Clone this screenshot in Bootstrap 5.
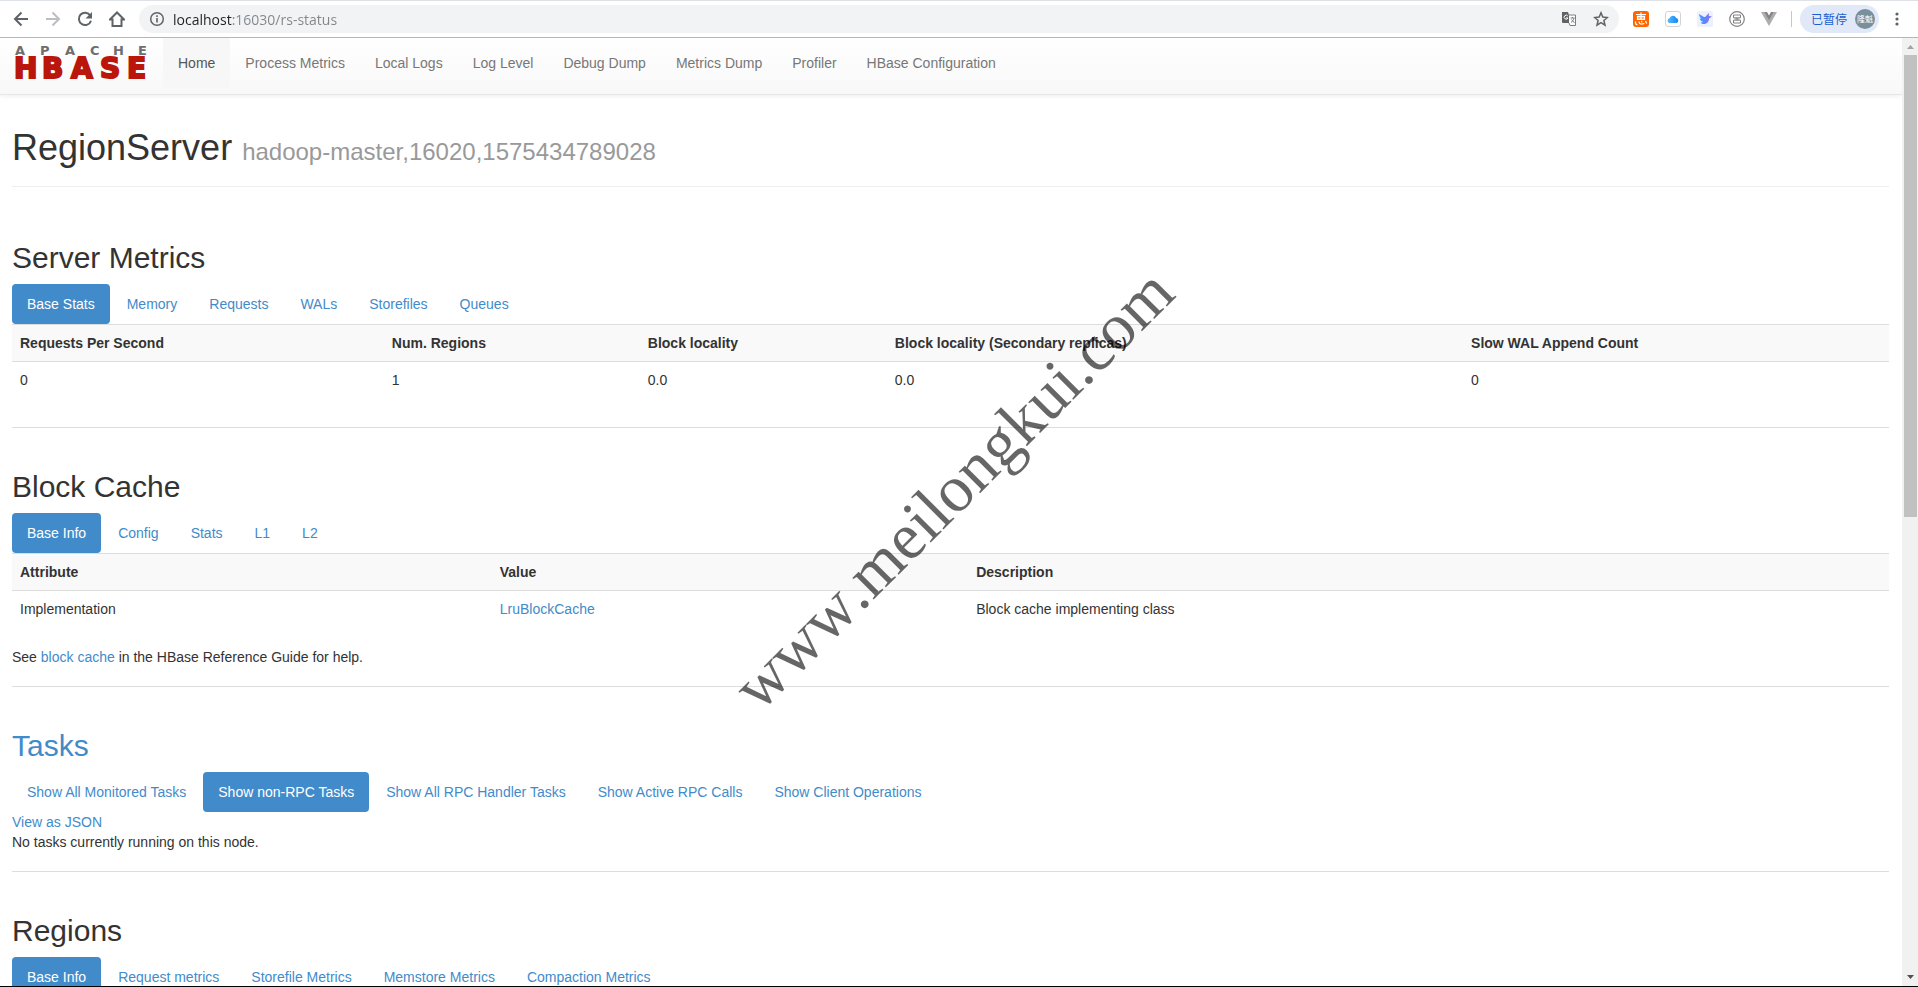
<!DOCTYPE html>
<html lang="en">
<head>
<meta charset="utf-8">
<meta name="viewport" content="width=device-width, initial-scale=1">
<title>HBase Region Server: hadoop-master</title>
<link href="https://cdn.jsdelivr.net/npm/bootstrap@5.3.0/dist/css/bootstrap.min.css" rel="stylesheet">
<style>
body { font-family: "Liberation Sans", Arial, sans-serif; font-size: 14px; line-height: 20px; color: #333; border-bottom: 1px solid #000; }
a { color: #428bca; text-decoration: none; }

/* browser toolbar */
.toolbar { height: 38px; padding: 0 13px; border-top: 1px solid #dee1e6; border-bottom: 1px solid #b6b6b6; background: #fff; }
.toolbar svg { display: block; }
.tool-btn { padding: 0; border: 0; background: none; width: 16px; height: 16px; flex: none; }
.omnibox { height: 28px; margin: 0 14px; border-radius: 14px; background: #f1f3f4; padding: 0 10px; }
.omnibox input { border: 0; outline: 0; padding: 0; height: 26px; font: 14px/20px "Open Sans", sans-serif; color: #202124; -webkit-text-fill-color: transparent; background: linear-gradient(to right, #202124 59px, #80868b 59px); -webkit-background-clip: text; background-clip: text; }
.tool-sep { width: 1px; height: 16px; margin: 0 8px 0 14px; background: #c4c7cb; }
.profile { height: 28px; margin-right: 10px; border: 0; border-radius: 14px; background: #e1e9f8; color: #1a5fd0; padding: 0 4px 0 11px; gap: 8px; font: 12px/20px "Noto Sans CJK SC", sans-serif; }
.avatar { width: 20px; height: 20px; border-radius: 50%; background: #78909c; color: #fff; font-size: 8px; line-height: 20px; text-align: center; }

/* scrolled page */
.page-view { overflow: hidden; }
.site-nav { padding: 0 0 0 14px; border-bottom: 1px solid #e7e7e7; background: linear-gradient(#fff, #f8f8f8); box-shadow: 0 1px 5px rgba(0,0,0,.075); height: 57px; }
.brand { margin-right: 15px; }
.brand svg { overflow: visible; }
.site-nav .nav-link { padding: 15px; line-height: 20px; height: 50px; color: #777; }
.site-nav .nav-link.active { color: #555; background: #f7f7f7; }
.page-body { padding: 33px 13px 0 12px; }
.page-title { font-size: 36px; line-height: 40px; margin: 0; padding-bottom: 14px; border-bottom: 1px solid #eee; font-weight: 400; }
.page-title small { font-size: 24px; color: #999; font-weight: 400; }
.block { padding: 42px 0 9px; border-bottom: 1px solid #ddd; }
.block:first-of-type { padding-top: 54px; }
.block h2 { font-size: 30px; line-height: 33px; margin: 0 0 10px; font-weight: 400; }
.block .nav { gap: 2px; }
.block .nav-link { padding: 10px 15px; border-radius: 4px; line-height: 20px; color: #428bca; }
.block .nav-link.active { background: #428bca; color: #fff; }
.block p { margin: 0 0 10px; }
.data-table { margin-bottom: 20px; color: #333; }
.data-table > tbody > tr > * { border-top: 1px solid #ddd; border-bottom: 0; padding: 8px; color: #333; }
.data-table > tbody > tr:nth-child(odd) > * { background: #f9f9f9; }

.scroll-rail { width: 16px; background: #f1f1f1; padding: 0 1px 0 2px; }
.scroll-thumb { height: 48.75%; background: #c1c1c1; }
.scroll-rail svg { display: block; flex: none; }
.watermark { position: absolute; top: calc(50% - 4px); left: calc(50% - 6px); font: 66px/66px "Liberation Serif", "Times New Roman", serif; font-kerning: none; color: rgba(0,0,0,.6); white-space: nowrap; transform: translate(-50%, -50%) rotate(-45deg); pointer-events: none; }
</style>
</head>
<body class="d-flex flex-column vh-100 overflow-hidden position-relative">

<header class="toolbar d-flex align-items-center flex-shrink-0">
  <div class="d-flex gap-3 flex-shrink-0">
    <button class="tool-btn" aria-label="Back"><svg width="16" height="16" fill="none" stroke="#5f6368" stroke-width="2"><path d="M15 8H2.500M8.500 1.500L2 8l6.500 6.500"/></svg></button>
    <button class="tool-btn" aria-label="Forward"><svg width="16" height="16" fill="none" stroke="#bcbec1" stroke-width="2"><path d="M1 8h12.500M7.500 1.500L14 8l-6.500 6.500"/></svg></button>
    <button class="tool-btn" aria-label="Reload"><svg width="16" height="16" fill="none" stroke="#5f6368" stroke-width="2"><path d="M13.300 4.500A6.200 6.200 0 1 0 14 9.700"/><path d="M15 1v6.500H8.500z" fill="#5f6368" stroke="none"/></svg></button>
    <button class="tool-btn" aria-label="Home"><svg width="16" height="16" fill="none" stroke="#5f6368" stroke-width="2"><path d="M1 8.500h2.500V15h9V8.500H15L8 1.500z"/></svg></button>
  </div>
  <div class="omnibox d-flex align-items-center flex-grow-1">
    <button class="tool-btn" aria-label="Site information"><svg width="16" height="16" fill="none" stroke="#5f6368"><circle cx="8" cy="8" r="6.300" stroke-width="1.500"/><path d="M8 7v4.500M8 4.200v1.700" stroke-width="1.600"/></svg></button>
    <input class="flex-grow-1 ms-2" type="text" aria-label="Address" value="localhost:16030/rs-status">
    <button class="tool-btn" aria-label="Translate"><svg width="16" height="16"><path d="M1 1h6l3.500 11H2a1 1 0 0 1-1-1z" fill="#5f6368"/><path d="M8 4h6.500v10.500H9L8 12" fill="#fff" stroke="#7a7e82"/><path d="M6.800 5A2 2 0 1 0 7 7H5" fill="none" stroke="#fff"/><path d="M9.500 7h4M11.500 6v1M13 7c-.5 2-1.500 3.500-3 4.500M10.500 8.500l3 3.500" fill="none" stroke="#7a7e82"/></svg></button>
    <button class="tool-btn ms-3" aria-label="Bookmark"><svg width="16" height="16" fill="none" stroke="#5f6368" stroke-width="1.500"><path d="M8 1.800l1.800 4.300 4.600.4-3.500 3 1.100 4.600L8 11.700l-4 2.400 1.100-4.600-3.500-3 4.600-.4z"/></svg></button>
  </div>
  <div class="d-flex gap-3 flex-shrink-0">
    <button class="tool-btn" aria-label="Shopping extension"><svg width="16" height="16"><rect width="16" height="16" rx="3" fill="#f60"/><path d="M3 3.500h10M8 1.500v7M4.500 5.300h7v3.200h-7zM4.500 7h7M2.500 10.500v1.500q0 1.500 2 2M6 10.500q0 2.500 2.500 2.500t2.500-1M8.500 10l.5 1.500M12.500 10l1.200 2.500" fill="none" stroke="#fff" stroke-width="1.200"/></svg></button>
    <button class="tool-btn" aria-label="Cloud extension"><svg width="16" height="16"><defs><linearGradient id="cloud"><stop stop-color="#55b9ff"/><stop offset="1" stop-color="#1687f0"/></linearGradient></defs><rect x=".5" y=".5" width="15" height="15" rx="2.500" fill="#fff" stroke="#d4d4d4"/><path d="M4.500 12a2.400 2.400 0 0 1 0-4.700 3.600 3.600 0 0 1 6.700-.3A2.600 2.600 0 0 1 11.500 12z" fill="url(#cloud)"/></svg></button>
    <button class="tool-btn" aria-label="Bird extension"><svg width="16" height="16"><defs><linearGradient id="bird"><stop stop-color="#3c9cff"/><stop offset="1" stop-color="#8c6cf5"/></linearGradient></defs><rect width="16" height="16" rx="2" fill="#edf1fd"/><path d="M2 3l5 3c1 .2 1.500-.3 2-1l3-3-.2 3L15 5.500l-3 2c0 3-2 5.500-5 5.500-1.500 0-2.500-.4-3.500-1.200L6 11C4 10 3 9 2.700 7.500l1.600.3C3 6.500 2.300 5 2 3z" fill="url(#bird)"/></svg></button>
    <button class="tool-btn" aria-label="Seal extension"><svg width="16" height="16" fill="none" stroke="#828282"><circle cx="8" cy="8" r="7.300" stroke-width="1.200"/><path d="M4.500 4h7v2.800h-7zM4.500 9.200h7V12h-7zM5.500 8h5M8 6.800v2.400"/></svg></button>
    <button class="tool-btn" aria-label="Vue extension"><svg width="16" height="16"><path d="M0 1h3.500L8 8.500 12.500 1H16L8 15z" fill="#adadad"/><path d="M3.200 1H6l2 3.400L10 1h2.800L8 9.200z" fill="#848484"/></svg></button>
  </div>
  <div class="tool-sep flex-shrink-0"></div>
  <button class="profile d-flex align-items-center flex-shrink-0">已暂停<span class="avatar">隆魁</span></button>
  <button class="tool-btn" aria-label="Menu"><svg width="16" height="16" fill="#5f6368"><circle cx="8" cy="3" r="1.600"/><circle cx="8" cy="8" r="1.600"/><circle cx="8" cy="13" r="1.600"/></svg></button>
</header>

<div class="d-flex flex-fill overflow-hidden">
  <main class="page-view flex-fill">
    <nav class="site-nav d-flex align-items-start" aria-label="HBase">
      <a href="#" class="brand" aria-label="Apache HBase">
        <svg class="d-block" width="134" height="50" font-family="DejaVu Sans" font-weight="bold">
          <text x="1 26 51 76 99 124" y="17" font-size="13" fill="#6d6e71">APACHE</text>
          <text x="0 28 57 86 113" y="40" font-size="28" fill="#ba160c" stroke="#ba160c" stroke-width="2">HBASE</text>
        </svg>
      </a>
      <ul class="nav">
        <li><a class="nav-link active" href="#">Home</a></li>
        <li><a class="nav-link" href="#">Process Metrics</a></li>
        <li><a class="nav-link" href="#">Local Logs</a></li>
        <li><a class="nav-link" href="#">Log Level</a></li>
        <li><a class="nav-link" href="#">Debug Dump</a></li>
        <li><a class="nav-link" href="#">Metrics Dump</a></li>
        <li><a class="nav-link" href="#">Profiler</a></li>
        <li><a class="nav-link" href="#">HBase Configuration</a></li>
      </ul>
    </nav>

    <div class="page-body">
      <h1 class="page-title">RegionServer <small>hadoop-master,16020,1575434789028</small></h1>

      <section class="block">
        <h2>Server Metrics</h2>
        <ul class="nav nav-pills">
          <li><a class="nav-link active" href="#">Base Stats</a></li>
          <li><a class="nav-link" href="#">Memory</a></li>
          <li><a class="nav-link" href="#">Requests</a></li>
          <li><a class="nav-link" href="#">WALs</a></li>
          <li><a class="nav-link" href="#">Storefiles</a></li>
          <li><a class="nav-link" href="#">Queues</a></li>
        </ul>
        <table class="table data-table">
          <tbody>
            <tr><th>Requests Per Second</th><th>Num. Regions</th><th>Block locality</th><th>Block locality (Secondary replicas)</th><th>Slow WAL Append Count</th></tr>
            <tr><td>0</td><td>1</td><td>0.0</td><td>0.0</td><td>0</td></tr>
          </tbody>
        </table>
      </section>

      <section class="block">
        <h2>Block Cache</h2>
        <ul class="nav nav-pills">
          <li><a class="nav-link active" href="#">Base Info</a></li>
          <li><a class="nav-link" href="#">Config</a></li>
          <li><a class="nav-link" href="#">Stats</a></li>
          <li><a class="nav-link" href="#">L1</a></li>
          <li><a class="nav-link" href="#">L2</a></li>
        </ul>
        <table class="table data-table">
          <tbody>
            <tr><th>Attribute</th><th>Value</th><th>Description</th></tr>
            <tr><td>Implementation</td><td><a href="#">LruBlockCache</a></td><td>Block cache implementing class</td></tr>
          </tbody>
        </table>
        <p>See <a href="#">block cache</a> in the HBase Reference Guide for help.</p>
      </section>

      <section class="block">
        <h2><a href="#">Tasks</a></h2>
        <ul class="nav nav-pills">
          <li><a class="nav-link" href="#">Show All Monitored Tasks</a></li>
          <li><a class="nav-link active" href="#">Show non-RPC Tasks</a></li>
          <li><a class="nav-link" href="#">Show All RPC Handler Tasks</a></li>
          <li><a class="nav-link" href="#">Show Active RPC Calls</a></li>
          <li><a class="nav-link" href="#">Show Client Operations</a></li>
        </ul>
        <div><a href="#">View as JSON</a></div>
        <p>No tasks currently running on this node.</p>
      </section>

      <section class="block">
        <h2>Regions</h2>
        <ul class="nav nav-pills">
          <li><a class="nav-link active" href="#">Base Info</a></li>
          <li><a class="nav-link" href="#">Request metrics</a></li>
          <li><a class="nav-link" href="#">Storefile Metrics</a></li>
          <li><a class="nav-link" href="#">Memstore Metrics</a></li>
          <li><a class="nav-link" href="#">Compaction Metrics</a></li>
        </ul>
      </section>
    </div>
  </main>
  <div class="scroll-rail d-flex flex-column flex-shrink-0" aria-hidden="true">
    <svg width="13" height="17"><path d="M3 11l3.500-4 3.500 4z" fill="#a3a3a3"/></svg>
    <div class="scroll-thumb"></div>
    <svg class="mt-auto" width="13" height="17"><path d="M3 6l3.500 4L10 6z" fill="#505050"/></svg>
  </div>
</div>

<div class="watermark">www.meilongkui.com</div>

<script src="https://cdn.jsdelivr.net/npm/bootstrap@5.3.0/dist/js/bootstrap.bundle.min.js"></script>
</body>
</html>
